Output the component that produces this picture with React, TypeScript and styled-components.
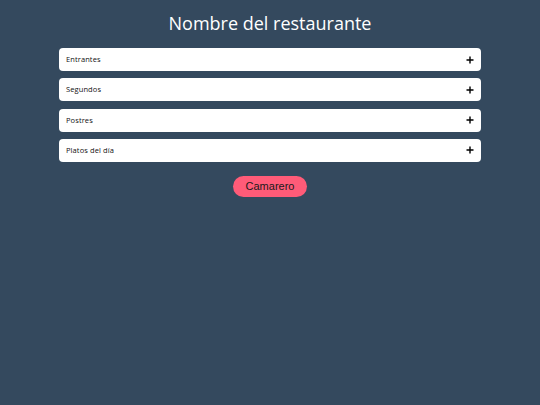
import React from "react";
import styled, { createGlobalStyle } from "styled-components";

const GlobalStyle = createGlobalStyle`
  html, body {
    margin: 0;
    padding: 0;
    background: #34495e;
  }
  body {
    min-height: 405px;
    font-family: "Open Sans", "Liberation Sans", sans-serif;
  }
`;

const Page = styled.div`
  display: flex;
  flex-direction: column;
  align-items: center;
  padding-top: 11px;
`;

const Title = styled.h1`
  margin: 0 0 12px;
  color: #ffffff;
  font-family: "Open Sans", sans-serif;
  font-weight: 400;
  font-size: 18px;
  line-height: 25px;
`;

const MenuList = styled.div`
  display: flex;
  flex-direction: column;
  gap: 7.3px;
  width: 422px;
`;

const MenuItem = styled.div`
  display: flex;
  align-items: center;
  justify-content: space-between;
  height: 23px;
  padding: 0 7px;
  background: #ffffff;
  border-radius: 4px;
  box-sizing: border-box;
  cursor: pointer;
`;

const ItemLabel = styled.span`
  font-size: 7.5px;
  line-height: 10px;
  margin-top: -1px;
  color: #111111;
  letter-spacing: 0.1px;
`;

const PlusIcon = styled.svg`
  width: 8px;
  height: 8px;
`;

const WaiterButton = styled.button`
  margin-top: 14px;
  width: 74px;
  height: 21px;
  border: none;
  border-radius: 11px;
  background: #ff5b78;
  color: #1a1a1a;
  font-family: "Liberation Sans", Arial, sans-serif;
  font-size: 11px;
  cursor: pointer;
`;

const sections = ["Entrantes", "Segundos", "Postres", "Platos del día"];

export default function App() {
  return (
    <>
      <GlobalStyle />
      <Page>
        <Title>Nombre del restaurante</Title>
        <MenuList>
          {sections.map((s) => (
            <MenuItem key={s}>
              <ItemLabel>{s}</ItemLabel>
              <PlusIcon viewBox="0 0 8 8">
                <path d="M4 0.5V7.5M0.5 4H7.5" stroke="#000" strokeWidth="1.4" />
              </PlusIcon>
            </MenuItem>
          ))}
        </MenuList>
        <WaiterButton>Camarero</WaiterButton>
      </Page>
    </>
  );
}
